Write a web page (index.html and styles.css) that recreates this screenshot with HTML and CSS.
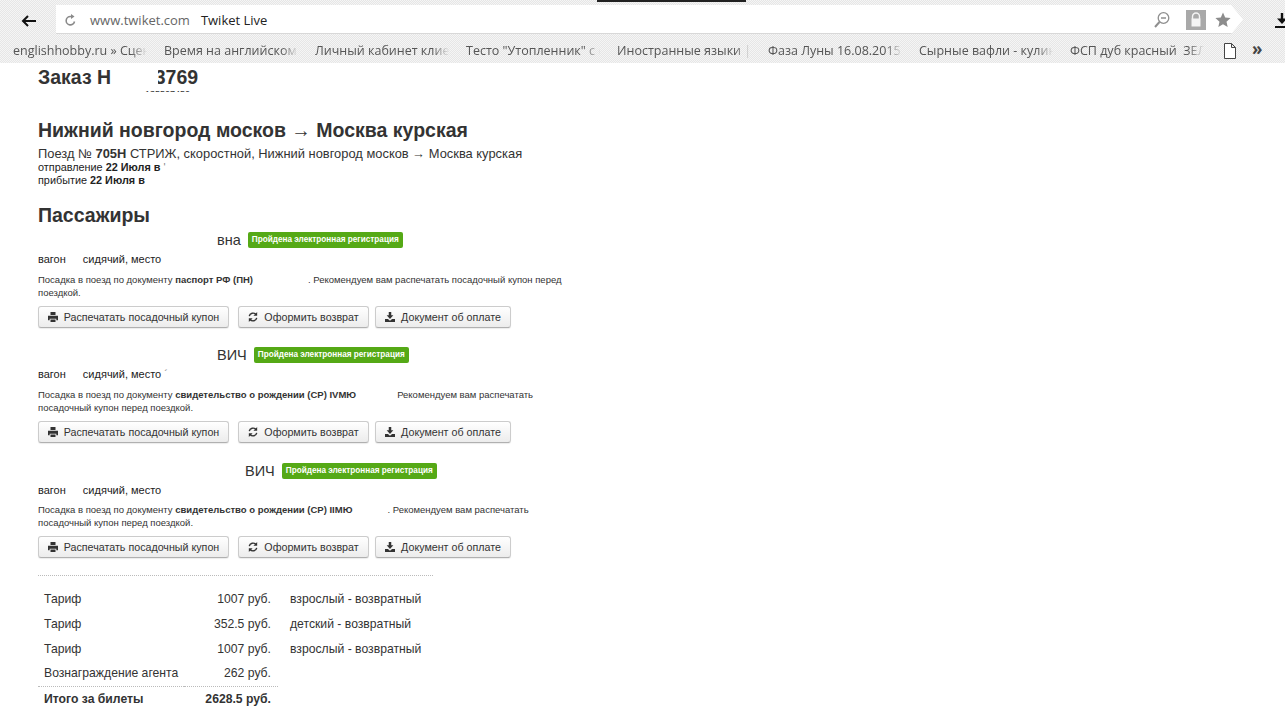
FILE: index.html
```html
<!DOCTYPE html>
<html lang="ru">
<head>
<meta charset="utf-8">
<title>Twiket Live</title>
<link rel="stylesheet" href="styles.css">
</head>
<body>
<header class="chrome">
  <div class="tabstrip"><div class="active-tab"></div></div>
  <div class="toolbar">
    <svg class="back" width="15" height="12" viewBox="0 0 15 12"><path d="M15 6H2M7 1 2 6l5 5" fill="none" stroke="#111" stroke-width="2"/></svg>
    <div class="omnibox">
      <svg class="reload" width="11" height="12" viewBox="0 0 11 12"><path d="M9.500 7.500A4.200 4.200 0 1 1 5.500 2.500h1" fill="none" stroke="#8a8a8a" stroke-width="1.600"/><path d="M6 0 9.500 2.500 6 5z" fill="#8a8a8a"/></svg>
      <span class="host">www.twiket.com</span>
      <span class="page-title">Twiket Live</span>
      <span class="omni-end">
        <svg class="zoom-ico" width="18" height="18" viewBox="0 0 18 18"><circle cx="10.500" cy="7" r="5.300" fill="none" stroke="#8f8f8f" stroke-width="1.300"/><path d="M8 7h5" stroke="#8f8f8f" stroke-width="1.300"/><path d="M6.500 11 2 16" stroke="#8f8f8f" stroke-width="2"/></svg>
        <svg class="lock" width="20" height="20" viewBox="0 0 20 20"><rect width="20" height="20" fill="#a9a9a9"/><path d="M6.500 9V6.500a3.500 3.500 0 0 1 7 0V9" fill="none" stroke="#f4f4f4" stroke-width="1.400"/><rect x="5.500" y="8.500" width="9" height="8" fill="#f4f4f4"/></svg>
        <svg class="star" width="16" height="16" viewBox="0 0 16 16"><path d="M8 .6l2.200 5 5.400.5-4.100 3.600 1.200 5.400L8 12.300l-4.700 2.800 1.200-5.400L.4 6.100l5.400-.5z" fill="#8c8c8c"/></svg>
      </span>
    </div>
    <svg class="download" width="14" height="15" viewBox="0 0 14 15"><path d="M7 0v6" stroke="#111" stroke-width="2.400"/><path d="M2 5.500h10l-5 5.500z" fill="#111"/><path d="M0 14h14" stroke="#111" stroke-width="2"/></svg>
  </div>
  <nav class="bookmarks">
    <div class="bm-list">
      <span class="bm">englishhobby.ru » Сценарий</span>
      <span class="bm">Время на английском языке</span>
      <span class="bm">Личный кабинет клиента</span>
      <span class="bm">Тесто "Утопленник" с сыром</span>
      <span class="bm">Иностранные языки | Изучение</span>
      <span class="bm">Фаза Луны 16.08.2015. Сегодня</span>
      <span class="bm">Сырные вафли - кулинарный</span>
      <span class="bm">ФСП дуб красный&nbsp;&nbsp;ЗЕЛЕНЫЙ</span>
    </div>
    <svg class="doc" width="12" height="16" viewBox="0 0 12 16"><path d="M.5.5h7l4 4v11H.5zM7.500.5v4h4" fill="#fff" stroke="#444"/></svg>
    <span class="more">»</span>
  </nav>
</header>

<main class="page">
  <h1 class="order-title">Заказ Н<span class="gap g-order"></span><span class="order-tail">3769</span></h1>
  <div class="order-sub"><span class="gap g-sub"></span>135507450</div>

  <section class="route">
    <h2>Нижний новгород москов → Москва курская</h2>
    <p class="train">Поезд № <b>705Н</b> СТРИЖ, скоростной, Нижний новгород москов → Москва курская</p>
    <p class="times">отправление <b>22 Июля в</b> <span class="tick">'</span></p>
    <p class="times">прибытие <b>22 Июля в</b></p>
  </section>

  <h2 class="pass-title">Пассажиры</h2>

  <article class="passenger">
    <div class="name"><span class="gap g-n1"></span>вна<span class="label">Пройдена электронная регистрация</span></div>
    <div class="seat">вагон <span class="gap g-w"></span>сидячий, место</div>
    <p class="note">Посадка в поезд по документу <b>паспорт РФ (ПН)</b><span class="gap g-d1"></span>. Рекомендуем вам распечатать посадочный купон перед поездкой.</p>
    <div class="actions">
      <a class="btn btn-print"><svg class="ico" viewBox="0 0 12 12"><path d="M3 0h6v3.500H3zM0 4.500h12V10h-2V8H2v2H0zM3 9h6v3H3z" fill="#333"/></svg>Распечатать посадочный купон</a>
      <a class="btn btn-refund"><svg class="ico" viewBox="0 0 12 12"><path d="M1.500 5A4.600 4.600 0 0 1 9.500 3M10.500 7A4.600 4.600 0 0 1 2.500 9" fill="none" stroke="#333" stroke-width="1.700"/><path d="M11 0v4.500H6.500zM1 12V7.500h4.500z" fill="#333"/></svg>Оформить возврат</a>
      <a class="btn btn-doc"><svg class="ico" viewBox="0 0 12 12"><path d="M4.500 0h3v4H10L6 8.500 2 4h2.500zM0 8.500h3.500L6 10.500l2.500-2H12V12H0z" fill="#333"/></svg>Документ об оплате</a>
    </div>
  </article>

  <article class="passenger">
    <div class="name"><span class="gap g-n2"></span>ВИЧ<span class="label">Пройдена электронная регистрация</span></div>
    <div class="seat">вагон <span class="gap g-w"></span>сидячий, место <span class="tick">´</span></div>
    <p class="note note-narrow">Посадка в поезд по документу <b>свидетельство о рождении (СР) IVМЮ</b><span class="gap g-d2"></span>Рекомендуем вам распечатать посадочный купон перед поездкой.</p>
    <div class="actions">
      <a class="btn btn-print"><svg class="ico" viewBox="0 0 12 12"><path d="M3 0h6v3.500H3zM0 4.500h12V10h-2V8H2v2H0zM3 9h6v3H3z" fill="#333"/></svg>Распечатать посадочный купон</a>
      <a class="btn btn-refund"><svg class="ico" viewBox="0 0 12 12"><path d="M1.500 5A4.600 4.600 0 0 1 9.500 3M10.500 7A4.600 4.600 0 0 1 2.500 9" fill="none" stroke="#333" stroke-width="1.700"/><path d="M11 0v4.500H6.500zM1 12V7.500h4.500z" fill="#333"/></svg>Оформить возврат</a>
      <a class="btn btn-doc"><svg class="ico" viewBox="0 0 12 12"><path d="M4.500 0h3v4H10L6 8.500 2 4h2.500zM0 8.500h3.500L6 10.500l2.500-2H12V12H0z" fill="#333"/></svg>Документ об оплате</a>
    </div>
  </article>

  <article class="passenger passenger-last">
    <div class="name"><span class="gap g-n3"></span>ВИЧ<span class="label">Пройдена электронная регистрация</span></div>
    <div class="seat">вагон <span class="gap g-w"></span>сидячий, место</div>
    <p class="note note-narrow">Посадка в поезд по документу <b>свидетельство о рождении (СР) IIМЮ</b><span class="gap g-d3"></span>. Рекомендуем вам распечатать посадочный купон перед поездкой.</p>
    <div class="actions">
      <a class="btn btn-print"><svg class="ico" viewBox="0 0 12 12"><path d="M3 0h6v3.500H3zM0 4.500h12V10h-2V8H2v2H0zM3 9h6v3H3z" fill="#333"/></svg>Распечатать посадочный купон</a>
      <a class="btn btn-refund"><svg class="ico" viewBox="0 0 12 12"><path d="M1.500 5A4.600 4.600 0 0 1 9.500 3M10.500 7A4.600 4.600 0 0 1 2.500 9" fill="none" stroke="#333" stroke-width="1.700"/><path d="M11 0v4.500H6.500zM1 12V7.500h4.500z" fill="#333"/></svg>Оформить возврат</a>
      <a class="btn btn-doc"><svg class="ico" viewBox="0 0 12 12"><path d="M4.500 0h3v4H10L6 8.500 2 4h2.500zM0 8.500h3.500L6 10.500l2.500-2H12V12H0z" fill="#333"/></svg>Документ об оплате</a>
    </div>
  </article>

  <section class="fares">
    <table>
      <tr><td class="f-name">Тариф</td><td class="f-sum">1007 руб.</td><td class="f-type">взрослый - возвратный</td></tr>
      <tr><td class="f-name">Тариф</td><td class="f-sum">352.5 руб.</td><td class="f-type">детский - возвратный</td></tr>
      <tr><td class="f-name">Тариф</td><td class="f-sum">1007 руб.</td><td class="f-type">взрослый - возвратный</td></tr>
      <tr><td class="f-name">Вознаграждение агента</td><td class="f-sum">262 руб.</td><td class="f-type"></td></tr>
      <tr class="total"><td class="f-name">Итого за билеты</td><td class="f-sum">2628.5 руб.</td><td class="f-type"></td></tr>
    </table>
  </section>
</main>
</body>
</html>
```
FILE: styles.css
```css
* { box-sizing: border-box; }
html, body { margin: 0; height: 100%; overflow: hidden; background: #fff; }
body { font-family: "Liberation Sans", Arial, sans-serif; color: #333; }
p, h1, h2 { margin: 0; }

.chrome {
  height: 63px;
  background: repeating-conic-gradient(#e6e6e6 0 25%, #f5f5f5 0 50%) 0 0 / 2px 2px;
  display: flex;
  flex-direction: column;
  font-family: "Open Sans", sans-serif;
}
.tabstrip { height: 5px; padding-left: 597px; }
.active-tab { width: 149px; height: 2px; background: #222; }
.toolbar { height: 29px; display: flex; align-items: center; }
.back { margin: 2px 0 0 21px; flex: none; }
.omnibox {
  margin-left: 20px;
  width: 1187px;
  height: 29px;
  padding-top: 2px;
  flex: none;
  background: #fff;
  border-bottom: 1px solid #d8d8d8;
  clip-path: polygon(0 0, 99% 0, 100% 50%, 99% 100%, 0 100%);
  display: flex;
  align-items: center;
  font-size: 13px;
}
.reload { margin-left: 9px; flex: none; }
.host { margin-left: 14px; color: #666; }
.page-title { margin-left: 11px; color: #222; }
.omni-end { margin-left: auto; margin-right: 12px; display: flex; align-items: center; }
.lock { margin-left: 15px; }
.star { margin-left: 9px; }
.download { margin: 2px 0 0 32px; flex: none; }

.bookmarks { height: 29px; display: flex; align-items: center; padding: 4px 0 0 13px; font-size: 12.500px; color: #555; }
.bm-list { display: flex; width: 1209px; flex: none; }
.bm {
  width: 151px;
  flex: none;
  padding-right: 16px;
  white-space: nowrap;
  overflow: hidden;
  -webkit-mask-image: linear-gradient(90deg, #000 78%, transparent 89%);
  mask-image: linear-gradient(90deg, #000 78%, transparent 89%);
}
.doc { flex: none; margin-left: 2px; }
.more { margin-left: 16px; font-size: 17px; font-weight: 700; color: #444; line-height: 1; position: relative; top: -2px; }

.page { padding-left: 38px; }
.gap { display: inline-block; height: 1px; }
.order-title { font-size: 19.500px; line-height: 28px; height: 28px; font-weight: 700; white-space: nowrap; display: flex; }
.g-order { width: 47px; }
.order-tail { width: 40px; overflow: hidden; direction: rtl; }
.order-sub { height: 2px; overflow: hidden; font-size: 9px; line-height: 9px; margin-top: -1px; }
.g-sub { width: 107px; }

.route { margin-top: 27px; }
.route h2 { font-size: 19.500px; line-height: 22px; font-weight: 700; }
.train { font-size: 12.900px; line-height: 16px; margin-top: 5px; margin-bottom: -1px; }
.times { font-size: 10.850px; line-height: 13px; color: #222; }
.tick { color: #888; }
.pass-title { font-size: 19.500px; line-height: 24px; margin-top: 16px; font-weight: 700; }

.passenger { height: 115px; padding-top: 3px; }
.name { font-size: 14.500px; line-height: 20px; display: flex; align-items: center; white-space: nowrap; height: 20px; }
.passenger-last .name { margin-top: 1px; }
.g-n1 { width: 179px; }
.g-n2 { width: 179px; }
.g-n3 { width: 207px; }
.label {
  margin-left: 7px;
  background: #55a916;
  color: #fff;
  font-size: 8.200px;
  font-weight: 700;
  line-height: 16px;
  height: 16px;
  padding: 0 4px;
  border-radius: 2px;
}
.seat { font-size: 11px; line-height: 14px; margin-top: 2px; color: #222; white-space: nowrap; }
.passenger-last .seat { margin-bottom: -1px; }
.g-w { width: 14px; }
.note { font-size: 9.500px; line-height: 13px; margin-top: 7px; width: 530px; height: 26px; }
.note-narrow { width: 500px; }
.g-d1 { width: 55px; }
.g-d2 { width: 41px; }
.g-d3 { width: 35px; }

.actions { display: flex; margin-top: 7px; gap: 9px; }
.btn {
  height: 22px;
  display: flex;
  align-items: center;
  justify-content: center;
  gap: 6px;
  font-size: 10.700px;
  color: #333;
  background: linear-gradient(#fff, #ececec);
  border: 1px solid #ccc;
  border-bottom-color: #b0b0b0;
  border-radius: 3px;
  box-shadow: 0 1px 1px rgba(0, 0, 0, .08);
  white-space: nowrap;
}
.btn-print { width: 191px; }
.btn-refund { width: 131px; }
.btn-doc { width: 136px; margin-left: -3px; }
.ico { width: 10px; height: 10px; flex: none; }

.fares { width: 395px; border-top: 1px dotted #bbb; margin-top: 3px; padding-top: 10px; }
.fares table { border-collapse: collapse; font-size: 12.200px; }
.fares td { height: 25px; padding: 0; }
.f-name { width: 146px; padding-left: 6px !important; }
.f-sum { width: 94px; text-align: right; padding-right: 7px !important; }
.f-type { padding-left: 12px !important; }
.total td { font-weight: 700; }
.total .f-name, .total .f-sum { border-top: 1px dotted #bbb; }
```
